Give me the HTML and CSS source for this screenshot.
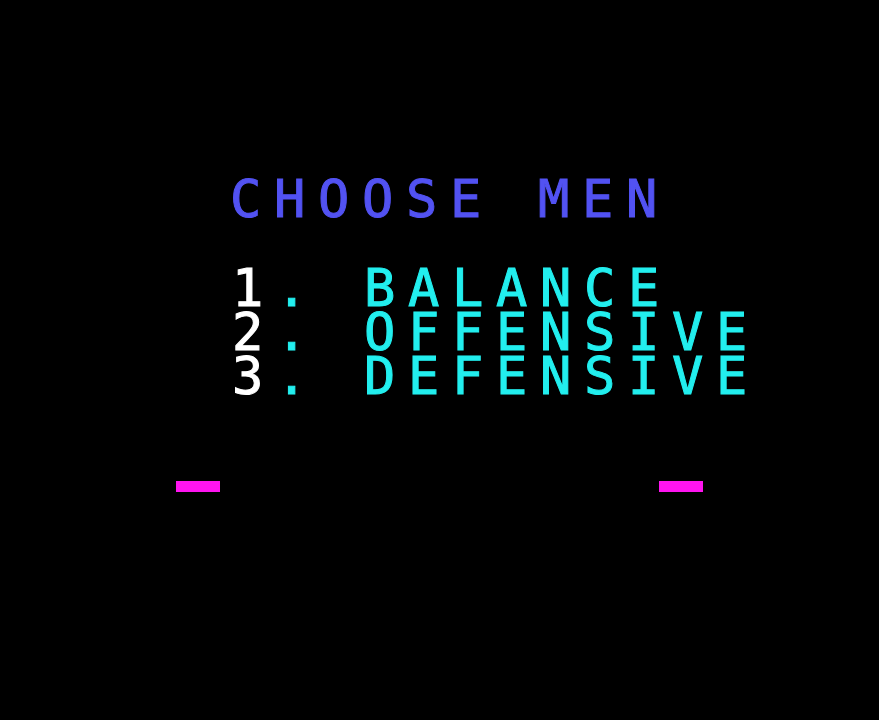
FILE: index.html
```html
<!DOCTYPE html>
<html lang="en">
<head>
    <meta charset="UTF-8">
    <meta name="viewport" content="width=device-width, initial-scale=1.0">
    <title>Choose Men</title>
    <link rel="stylesheet" href="styles.css">
</head>
<body>
    <!-- Team selection screen -->
    <div class="screen">
        <h1 class="title">CHOOSE MEN</h1>

        <ol class="menu">
            <li><span class="num">1</span>. BALANCE</li>
            <li><span class="num">2</span>. OFFENSIVE</li>
            <li><span class="num">3</span>. DEFENSIVE</li>
        </ol>

        <!-- Player cursors -->
        <div class="markers">
            <span class="marker"></span>
            <span class="marker"></span>
        </div>
    </div>
</body>
</html>
```

FILE: styles.css
```css
body {
    margin: 0;
    background: #000;
    height: 100vh;
    font-family: 'DejaVu Sans Mono', 'Liberation Mono', monospace;
}

.screen {
    padding-top: 177px;
}

.title {
    margin: 0 0 0 230px;
    font-size: 52px;
    font-weight: normal;
    line-height: 44px;
    letter-spacing: 12.7px;
    color: #5252f2;
    -webkit-text-stroke: 1px #5252f2;
}

.menu {
    list-style: none;
    margin: 45px 0 0 232px;
    padding: 0;
    font-size: 52px;
    line-height: 44px;
    letter-spacing: 12.7px;
    color: #22eeee;
    -webkit-text-stroke: 1px #22eeee;
}

.menu li {
    white-space: pre;
}

.menu .num {
    color: #fff;
    -webkit-text-stroke: 1px #fff;
}

.markers {
    display: flex;
    justify-content: space-between;
    width: 527px;
    margin: 83px 0 0 176px;
}

.marker {
    width: 44px;
    height: 11px;
    background: #ff14f0;
}
```
